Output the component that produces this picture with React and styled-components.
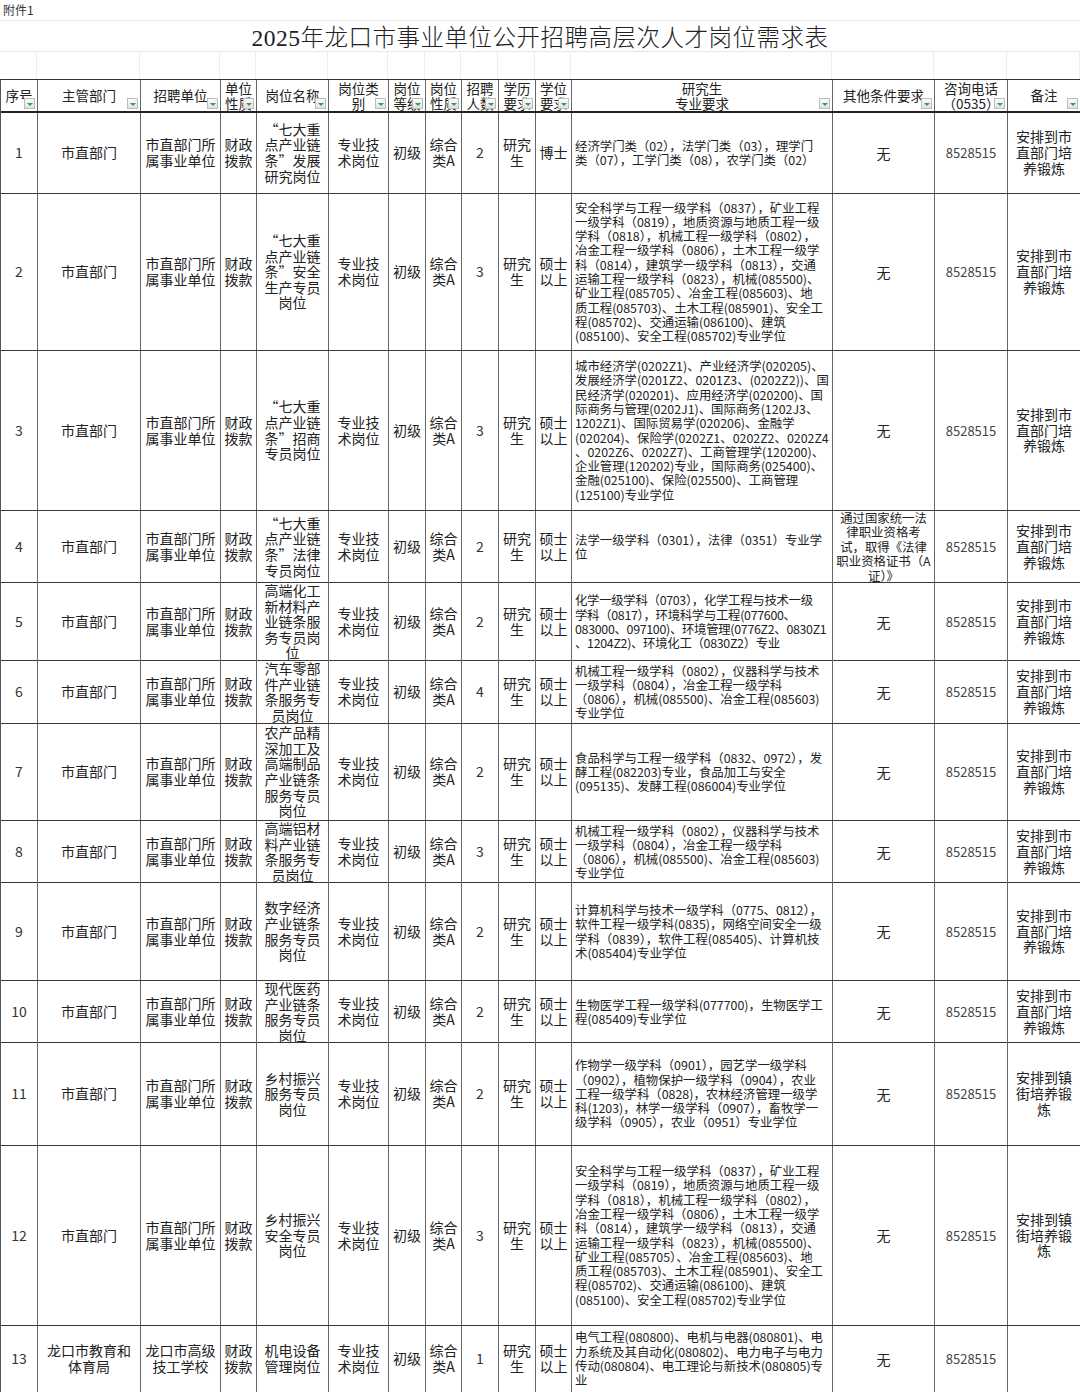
import React from "react";
import styled, { createGlobalStyle } from "styled-components";

const COLS =
  "37px 103px 80px 36px 72px 60px 37px 36px 37px 37px 36px 261px 102px 73px 73px";

const GlobalStyle = createGlobalStyle`
  html, body {
    margin: 0;
    padding: 0;
    background: #fff;
  }
  body {
    font-family: "Noto Sans CJK SC", "Noto Sans", sans-serif;
    color: #222;
  }
`;

const Sheet = styled.div`
  width: 1080px;
  overflow: hidden;
`;

const NoteLine = styled.div`
  height: 21px;
  box-sizing: border-box;
  border-bottom: 1px solid #e6e6e6;
  padding-left: 3px;
  font-size: 12px;
  line-height: 20px;
  color: #333;
`;

const TitleLine = styled.div`
  height: 31px;
  box-sizing: border-box;
  border-bottom: 1px solid #e6e6e6;
  display: flex;
  justify-content: center;
  align-items: center;
  font-family: "Liberation Serif", "Noto Sans CJK SC", serif;
  font-size: 23.5px;
  font-weight: 300;
  color: #222;
  letter-spacing: 0.5px;
`;

const GridRow = styled.div`
  display: grid;
  grid-template-columns: ${COLS};
  height: ${(p) => p.$h}px;
  box-sizing: border-box;
  border-bottom: ${(p) => (p.$head ? "2px solid #222" : "1px solid #3a3a3a")};
`;

const SpacerRow = styled(GridRow)`
  border-bottom: none;
`;

const SpacerCell = styled.div`
  border-right: 1px solid #ececec;
`;

const Table = styled.div`
  border-top: 1px solid #333;
  border-left: 1px solid #555;
`;

const Cell = styled.div`
  position: relative;
  box-sizing: border-box;
  border-right: 1px solid #666;
  display: flex;
  align-items: center;
  justify-content: ${(p) => (p.$left ? "flex-start" : "center")};
  text-align: ${(p) => (p.$left ? "left" : "center")};
  padding: ${(p) => (p.$left ? "0 0 0 3px" : "0 1px")};
  white-space: ${(p) => (p.$left ? "pre" : "pre-line")};
  font-size: ${(p) => p.$size || 14}px;
  line-height: ${(p) => p.$lh || 15.8}px;
  letter-spacing: ${(p) => p.$ls || 0}px;
  color: ${(p) => p.$color || "#222"};
  overflow: ${(p) => (p.$clip ? "hidden" : "visible")};
`;

const HeadCell = styled(Cell)`
  line-height: 15px;
  font-size: 13.5px;
  overflow: hidden;
`;

const FilterBtn = styled.span`
  position: absolute;
  right: 2px;
  bottom: 2px;
  width: 11px;
  height: 11px;
  box-sizing: border-box;
  border: 1px solid #bcbcbc;
  background: linear-gradient(#fbfbfb, #e2e2e2);
  display: flex;
  align-items: center;
  justify-content: center;

  &::after {
    content: "";
    border-left: 3px solid transparent;
    border-right: 3px solid transparent;
    border-top: 3px solid #3f9a55;
    margin-top: 1px;
  }
`;

const HEAD = [
  "序号",
  "主管部门",
  "招聘单位",
  "单位\n性质",
  "岗位名称",
  "岗位类\n别",
  "岗位\n等级",
  "岗位\n性质",
  "招聘\n人数",
  "学历\n要求",
  "学位\n要求",
  "研究生\n专业要求",
  "其他条件要求",
  "咨询电话\n（0535）",
  "备注",
];

const MAJOR_SAFE = `安全科学与工程一级学科（0837），矿业工程
一级学科（0819），地质资源与地质工程一级
学科（0818），机械工程一级学科（0802），
冶金工程一级学科（0806），土木工程一级学
科（0814），建筑学一级学科（0813），交通
运输工程一级学科（0823），机械(085500)、
矿业工程(085705）、冶金工程(085603)、地
质工程(085703)、土木工程(085901)、安全工
程(085702)、交通运输(086100)、建筑
(085100)、安全工程(085702)专业学位`;

const MAJOR_MECH = `机械工程一级学科（0802），仪器科学与技术
一级学科（0804），冶金工程一级学科
（0806），机械(085500)、冶金工程(085603)
专业学位`;

const CITY = "安排到市\n直部门培\n养锻炼";
const TOWN = "安排到镇\n街培养锻\n炼";

const ROWS = [
  {
    h: 81,
    name: "“七大重\n点产业链\n条”发展\n研究岗位",
    num: 2,
    deg: "博士",
    major: "经济学门类（02），法学门类（03），理学门\n类（07），工学门类（08），农学门类（02）",
  },
  {
    h: 157,
    name: "“七大重\n点产业链\n条”安全\n生产专员\n岗位",
    num: 3,
    major: MAJOR_SAFE,
  },
  {
    h: 160,
    name: "“七大重\n点产业链\n条”招商\n专员岗位",
    num: 3,
    major: `城市经济学(0202Z1)、产业经济学(020205)、
发展经济学(0201Z2、0201Z3、(0202Z2))、国
民经济学(020201)、应用经济学(020200)、国
际商务与管理(0202J1)、国际商务(1202J3、
1202Z1)、国际贸易学(020206)、金融学
(020204)、保险学(0202Z1、0202Z2、0202Z4
、0202Z6、0202Z7)、工商管理学(120200)、
企业管理(120202)专业，国际商务(025400)、
金融(025100)、保险(025500)、工商管理
(125100)专业学位`,
  },
  {
    h: 72,
    name: "“七大重\n点产业链\n条”法律\n专员岗位",
    num: 2,
    major: "法学一级学科（0301），法律（0351）专业学\n位",
    other: "通过国家统一法\n律职业资格考\n试，取得《法律\n职业资格证书（A\n证）》",
  },
  {
    h: 78,
    name: "高端化工\n新材料产\n业链条服\n务专员岗\n位",
    num: 2,
    ls: -0.3,
    major: `化学一级学科（0703），化学工程与技术一级
学科（0817），环境科学与工程(077600、
083000、097100)、环境管理(0776Z2、0830Z1
、1204Z2)、环境化工（0830Z2）专业`,
  },
  {
    h: 63,
    name: "汽车零部\n件产业链\n条服务专\n员岗位",
    num: 4,
    major: MAJOR_MECH,
  },
  {
    h: 97,
    name: "农产品精\n深加工及\n高端制品\n产业链条\n服务专员\n岗位",
    num: 2,
    major: `食品科学与工程一级学科（0832、0972），发
酵工程(082203)专业，食品加工与安全
(095135)、发酵工程(086004)专业学位`,
  },
  {
    h: 62,
    name: "高端铝材\n料产业链\n条服务专\n员岗位",
    num: 3,
    major: MAJOR_MECH,
  },
  {
    h: 98,
    name: "数字经济\n产业链条\n服务专员\n岗位",
    num: 2,
    major: `计算机科学与技术一级学科（0775、0812），
软件工程一级学科(0835)，网络空间安全一级
学科（0839），软件工程(085405)、计算机技
术(085404)专业学位`,
  },
  {
    h: 62,
    name: "现代医药\n产业链条\n服务专员\n岗位",
    num: 2,
    major: "生物医学工程一级学科(077700)，生物医学工\n程(085409)专业学位",
  },
  {
    h: 103,
    name: "乡村振兴\n服务专员\n岗位",
    num: 2,
    note: TOWN,
    major: `作物学一级学科（0901），园艺学一级学科
（0902），植物保护一级学科（0904），农业
工程一级学科（0828)，农林经济管理一级学
科(1203)，林学一级学科（0907），畜牧学一
级学科（0905），农业（0951）专业学位`,
  },
  {
    h: 180,
    name: "乡村振兴\n安全专员\n岗位",
    num: 3,
    note: TOWN,
    major: MAJOR_SAFE,
  },
  {
    h: 67,
    dept: "龙口市教育和\n体育局",
    unit: "龙口市高级\n技工学校",
    name: "机电设备\n管理岗位",
    num: 1,
    note: "",
    major: `电气工程(080800)、电机与电器(080801)、电
力系统及其自动化(080802)、电力电子与电力
传动(080804)、电工理论与新技术(080805)专
业`,
  },
];

function DataRow({ row, index }) {
  return (
    <GridRow $h={row.h}>
      <Cell $color="#333">{index + 1}</Cell>
      <Cell>{row.dept || "市直部门"}</Cell>
      <Cell>{row.unit || "市直部门所\n属事业单位"}</Cell>
      <Cell>{"财政\n拨款"}</Cell>
      <Cell $lh={15.6}>{row.name}</Cell>
      <Cell>{"专业技\n术岗位"}</Cell>
      <Cell>初级</Cell>
      <Cell>{"综合\n类A"}</Cell>
      <Cell $color="#333">{row.num}</Cell>
      <Cell>{"研究\n生"}</Cell>
      <Cell>{row.deg || "硕士\n以上"}</Cell>
      <Cell $left $clip $size={12.4} $lh={14.3} $ls={row.ls}>
        {row.major}
      </Cell>
      <Cell $size={row.other ? 12.4 : 14} $lh={14.4}>
        {row.other || "无"}
      </Cell>
      <Cell $size={13} $color="#444">
        8528515
      </Cell>
      <Cell $size={14}>{row.note ?? CITY}</Cell>
    </GridRow>
  );
}

export default function App() {
  return (
    <Sheet>
      <GlobalStyle />
      <NoteLine>附件1</NoteLine>
      <TitleLine>2025年龙口市事业单位公开招聘高层次人才岗位需求表</TitleLine>
      <SpacerRow $h={27}>
        {HEAD.map((h) => (
          <SpacerCell key={h} />
        ))}
      </SpacerRow>
      <Table>
        <GridRow $h={33} $head>
          {HEAD.map((h) => (
            <HeadCell key={h}>
              {h}
              <FilterBtn />
            </HeadCell>
          ))}
        </GridRow>
        {ROWS.map((row, i) => (
          <DataRow key={i} row={row} index={i} />
        ))}
      </Table>
    </Sheet>
  );
}
